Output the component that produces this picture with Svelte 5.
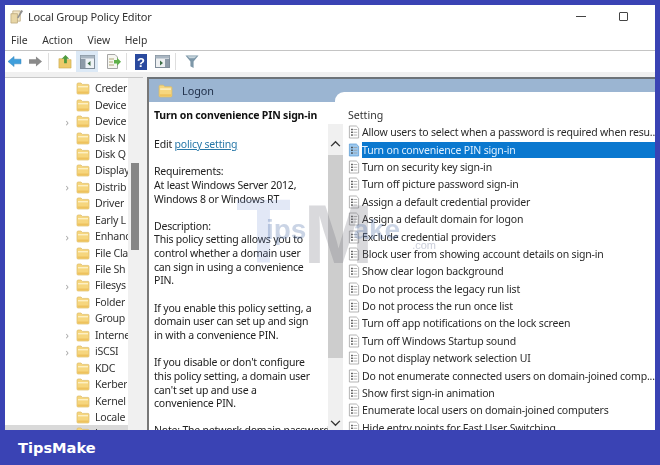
<script>
  const tree = [
    ['Creder', 0], ['Device', 0], ['Device', 1], ['Disk N', 0], ['Disk Q', 0],
    ['Display', 0], ['Distrib', 1], ['Driver', 0], ['Early L', 0], ['Enhanc', 1],
    ['File Cla', 0], ['File Sh', 0], ['Filesys', 1], ['Folder', 0], ['Group', 0],
    ['Interne', 1], ['iSCSI', 1], ['KDC', 0], ['Kerber', 0], ['Kernel', 0], ['Locale', 0], ['Logon', 0]
  ];
  const desc = [
    'Edit|', '', 'Requirements:', 'At least Windows Server 2012,', 'Windows 8 or Windows RT', '',
    'Description:', 'This policy setting allows you to', 'control whether a domain user', 'can sign in using a convenience', 'PIN.', '',
    'If you enable this policy setting, a', 'domain user can set up and sign', 'in with a convenience PIN.', '',
    "If you disable or don't configure", 'this policy setting, a domain user', "can't set up and use a", 'convenience PIN.', '',
    'Note: The network domain password'
  ];
  const settings = [
    'Allow users to select when a password is required when resu...',
    'Turn on convenience PIN sign-in',
    'Turn on security key sign-in',
    'Turn off picture password sign-in',
    'Assign a default credential provider',
    'Assign a default domain for logon',
    'Exclude credential providers',
    'Block user from showing account details on sign-in',
    'Show clear logon background',
    'Do not process the legacy run list',
    'Do not process the run once list',
    'Turn off app notifications on the lock screen',
    'Turn off Windows Startup sound',
    'Do not display network selection UI',
    'Do not enumerate connected users on domain-joined comp...',
    'Show first sign-in animation',
    'Enumerate local users on domain-joined computers',
    'Hide entry points for Fast User Switching'
  ];
</script>

{#snippet folder(w)}
  <svg class="folder" width={w} height={w} viewBox="0 0 14 14">
    <path d="M1 3.2 Q1 2 2.2 2 H5 L6.4 3.4 H12 Q13 3.4 13 4.4 V12 Q13 13 12 13 H2 Q1 13 1 12 Z" fill="#f6d67e" stroke="#dcbc68" stroke-width=".7"/>
    <path d="M2 5 H12 V6.4 H2 Z" fill="#fdf0c4"/>
    <path d="M1.5 10.5 H12.5 V12.4 H1.5 Z" fill="#eec25e"/>
  </svg>
{/snippet}

{#snippet policy(sel)}
  <svg class="policy" width="12" height="14" viewBox="0 0 13 14">
    <path d="M1.5 .5 H9 L11.5 3 V13.5 H1.5 Z" fill={sel ? '#9cc8ee' : '#fff'} stroke={sel ? '#5a9bd5' : '#9a9a9a'} stroke-width=".8"/>
    <g fill="#333"><rect x="3.5" y="3.5" width="1.6" height="1.6"/><rect x="3.5" y="6.5" width="1.6" height="1.6"/><rect x="3.5" y="9.5" width="1.6" height="1.6"/></g>
    <g stroke="#999" stroke-width=".8"><path d="M6 4.3 H10M6 7.3 H10M6 10.3 H10"/></g>
  </svg>
{/snippet}

<div class="page">
  <div class="window">
    <header class="title">
      <svg width="14" height="15" viewBox="0 0 15 16">
        <path d="M3 2 H11 V13 H3 Z" fill="#f2e6c8" stroke="#b9a67a" stroke-width=".8"/>
        <path d="M1 5 H8 V15 H1 Z" fill="#e8d6a6" stroke="#b9a67a" stroke-width=".8"/>
        <path d="M12 1 L14 2 L9 10 L7.6 9.4 Z" fill="#8f8f8f"/>
      </svg>
      <span>Local Group Policy Editor</span>
      <div class="win-btns">
        <i class="min"></i>
        <i class="max"></i>
      </div>
    </header>

    <nav class="menu">
      <span>File</span><span>Action</span><span>View</span><span>Help</span>
    </nav>

    <div class="toolbar">
      <svg width="15" height="13" viewBox="0 0 16 14"><path d="M1 7 L7.5 1.5 V4.5 H15 V9.5 H7.5 V12.5 Z" fill="#3f9fdc" stroke="#2d7fb8" stroke-width=".5"/></svg>
      <svg class="fwd" width="15" height="13" viewBox="0 0 16 14"><path d="M15 7 L8.5 1.5 V4.5 H1 V9.5 H8.5 V12.5 Z" fill="#8a8a8a"/></svg>
      <b class="sep"></b>
      <svg width="14" height="15" viewBox="0 0 15 16">
        <path d="M1 5 H6 L7 6 H14 V15 H1 Z" fill="#ecca6a" stroke="#c9a64a" stroke-width=".6"/>
        <path d="M8 1 L12 5 H9.5 V10 H6.5 V5 H4 Z" fill="#4e9a3e"/>
      </svg>
      <span class="active">
        <svg width="15" height="14" viewBox="0 0 15 14">
          <rect x=".5" y=".5" width="14" height="13" fill="#eef2f6" stroke="#7f8c99"/>
          <rect x=".5" y=".5" width="14" height="3" fill="#a9b6c2"/>
          <rect x="1" y="4" width="4.5" height="9" fill="#8d9aa7"/>
          <path d="M10.5 6 V11 L7.5 8.5 Z" fill="#3e6e46"/>
        </svg>
      </span>
      <svg class="ic2" width="15" height="15" viewBox="0 0 15 15">
        <path d="M1.5 .5 H9 L11.5 3 V14.5 H1.5 Z" fill="#f6f6f2" stroke="#a5a5a5"/>
        <path d="M3 5 H8M3 8 H7M3 11 H8" stroke="#b0a878"/>
        <path d="M8 6 H11 V3.8 L15 7.8 L11 11.8 V9.6 H8 Z" fill="#5fb04a"/>
      </svg>
      <b class="sep s1"></b>
      <svg width="12" height="16" viewBox="0 0 12 16">
        <rect width="12" height="16" fill="#2a4a9e"/>
        <text x="6" y="13" text-anchor="middle" font-family="Liberation Sans" font-weight="700" font-size="13" fill="#fff">?</text>
      </svg>
      <svg class="ic4" width="15" height="13" viewBox="0 0 15 13">
        <rect x=".5" y=".5" width="14" height="12" fill="#eef0f2" stroke="#7f8c99"/>
        <rect x=".5" y=".5" width="14" height="3" fill="#a9b6c2"/>
        <rect x="10" y="4" width="4" height="8" fill="#8d9aa7"/>
        <path d="M5 5.5 V10.5 L8 8 Z" fill="#3e6e46"/>
      </svg>
      <b class="sep"></b>
      <svg width="14" height="15" viewBox="0 0 15 15">
        <path d="M.5 1 H14.5 L9.2 7.5 V14.5 L5.8 12.5 V7.5 Z" fill="#7d97a8"/>
        <path d="M2.5 2 H12.5 L10 4 H5 Z" fill="#c6d4dc"/>
      </svg>
    </div>

    <div class="panes">
      <aside class="tree">
        <ul>
          {#each tree as [name, exp], i}
            <li class:current={i === tree.length - 1}>
              <em class:hidden={!exp}>›</em>
              {@render folder(14)}
              <span>{name}</span>
            </li>
          {/each}
        </ul>
        <div class="tree-scroll"><div class="tree-thumb"></div></div>
      </aside>

      <section class="right">
        <div class="head">
          {@render folder(15)}
          <span>Logon</span>
        </div>
        <div class="cut"></div>
        <div class="body">
          <div class="desc">
            <h2>Turn on convenience PIN sign-in</h2>
            {#each desc as line}
              {#if line === 'Edit|'}
                <p>Edit <a href="#top">policy setting </a></p>
              {:else}
                <p>{line}</p>
              {/if}
            {/each}
          </div>
          <div class="vscroll">
            <svg class="chev up" width="11" height="7" viewBox="0 0 12 8"><path d="M1 7 L6 2 L11 7" fill="none" stroke="#333" stroke-width="1.6"/></svg>
            <div class="vthumb"></div>
            <svg class="chev down" width="11" height="7" viewBox="0 0 12 8"><path d="M1 1 L6 6 L11 1" fill="none" stroke="#333" stroke-width="1.6"/></svg>
          </div>
          <div class="list">
            <div class="colhead">Setting</div>
            {#each settings as s, i}
              <div class="row" class:sel={i === 1}>
                {@render policy(i === 1)}
                <span>{s}</span>
              </div>
            {/each}
          </div>
        </div>
      </section>
    </div>

    <div class="mark"><span class="bigT">T</span><span class="sm ips">ips</span><span class="bigM">M</span><span class="sm ake">ake</span><small>.com</small></div>
  </div>
  <footer>TipsMake</footer>
</div>

<style>
  :global(body) { margin: 0; }
  .page {
    width: 660px; height: 465px; background: #3a43b4; overflow: hidden;
    display: flex; flex-direction: column;
    font-family: "Noto Sans", sans-serif; color: #222;
  }
  .window {
    position: relative; margin: 5px 5px 0; height: 425px; flex: none;
    background: #fff; overflow: hidden; display: flex; flex-direction: column;
    filter: blur(.3px);
  }
  .title {
    height: 23px; padding: 0 0 2px 5px; flex: none; display: flex; align-items: center; gap: 4px;
    font-size: 11px; letter-spacing: -.2px;
  }
  .title span { color: #333; }
  .win-btns { margin-left: auto; display: flex; align-items: center; gap: 33px; padding-right: 27px; }
  .min { width: 10px; height: 1px; background: #444; display: block; }
  .max { width: 7px; height: 7px; border: 1px solid #444; border-radius: 1px; display: block; }
  .menu {
    height: 20px; flex: none; display: flex; align-items: center; gap: 14.5px;
    padding-left: 6px; font-size: 10.4px; color: #333; border-bottom: 1px solid #c4c4c4;
  }
  .toolbar {
    height: 21px; flex: none; display: flex; align-items: center; padding-left: 2px;
  }
  .toolbar svg { display: block; flex: none; }
  .fwd { margin-left: 6px; }
  .sep { width: 1px; height: 17px; background: #dedede; margin: 0 9px 0 5px; display: block; }
  .active { background: #dce9f6; width: 22px; height: 21px; display: flex; align-items: center; justify-content: center; margin-left: 4px; }
  .ic2 { margin-left: 8px; }
  .s1 { margin-right: 8px; }
  .ic4 { margin-left: 8px; }
  .panes {
    flex: 1; min-height: 0; display: grid; grid-template-columns: 138px 1fr;
    column-gap: 4px; background: #f0f0f0; padding-top: 5px;
  }
  .tree {
    background: #fff; border-top: 1px solid #c8c8c8; position: relative; overflow: hidden;
    display: flex;
  }
  .tree ul { list-style: none; margin: 0; padding: 2px 0 0 0; flex: 1; min-width: 0; overflow: hidden; }
  .tree li {
    height: 16.45px; display: flex; align-items: center; font-size: 10.6px; letter-spacing: -.25px; color: #333;
    padding-left: 53px; white-space: nowrap; overflow: hidden;
  }
  .tree li.current { background: #d9d9d9; }
  .tree em { width: 18px; font-style: normal; color: #aaa; font-size: 11px; flex: none; text-align: center; }
  .tree em.hidden { visibility: hidden; }
  .tree li :global(.folder) { flex: none; margin-right: 5px; }
  .tree li span { overflow: hidden; }
  .tree-scroll { width: 15px; flex: none; background: #f0f0f0; padding: 85px 4px 0 3px; box-sizing: border-box; }
  .tree-thumb { height: 87px; background: #868686; }
  .right {
    position: relative; background: #fff; border-top: 2px solid #6d7378; border-left: 2px solid #777;
    display: flex; flex-direction: column; min-width: 0; overflow: hidden;
  }
  .head {
    height: 23px; flex: none; background: #9bb5d2; display: flex; align-items: center;
    gap: 9px; padding-left: 9px; font-size: 10.8px; color: #1d2c46;
  }
  .cut {
    position: absolute; left: 186px; right: 0; top: 13px; height: 20px; background: #fff;
    border-top-left-radius: 9px;
  }
  .body { flex: 1; min-height: 0; display: flex; position: relative; }
  .desc { width: 179px; flex: none; padding: 6px 0 0 5px; box-sizing: border-box; font-size: 10.5px; letter-spacing: -.2px; line-height: 13.65px; color: #222; }
  .desc h2 { font-size: 10.5px; letter-spacing: -.17px; line-height: 14px; font-weight: 700; margin: 0 0 16px; white-space: nowrap; color: #111; }
  .desc p { margin: 0; height: 13.65px; white-space: nowrap; overflow: hidden; }
  .desc a { color: #2878a8; text-decoration: underline; }
  .vscroll {
    width: 15px; flex: none; margin-top: 22px; background: #f0f0f0; display: flex; flex-direction: column; align-items: center;
  }
  .chev { flex: none; }
  .chev.up { margin: 16px 0 8px; }
  .chev.down { margin-top: auto; margin-bottom: 3px; }
  .vthumb { flex: none; height: 203px; align-self: stretch; background: #cdcdcd; }
  .list { flex: 1; min-width: 0; padding-left: 5px; }
  .colhead { font-size: 10.6px; height: 16.5px; padding-top: 5px; line-height: 16px; color: #333; }
  .row {
    height: 17.4px; display: flex; align-items: center; gap: 2px; font-size: 10.5px; letter-spacing: -.18px; color: #2a2a2a; white-space: nowrap;
  }
  .row :global(.policy) { flex: none; }
  .row span { flex: 1; line-height: 16px; }
  .row.sel span { background: #0a78cf; color: #dff0ff; }
  .mark {
    position: absolute; left: 231px; top: 182px; font: 700 28px/1 "Liberation Sans", sans-serif;
    white-space: nowrap; pointer-events: none;
  }
  .bigT { font-size: 90px; color: rgba(110, 140, 210, .2); }
  .bigM { font-size: 84px; color: rgba(110, 110, 120, .26); margin-left: -3px; margin-right: -20px; }
  .sm { color: rgba(90, 120, 175, .32); vertical-align: 24px; }
  .ips { margin-left: -25px; }
  .mark small { font-size: 11px; font-weight: 400; color: rgba(120, 130, 160, .4); margin-left: 12px; vertical-align: 14px; }
  footer {
    flex: 1; display: flex; align-items: center; padding-left: 18px;
    font: 700 14.6px "DejaVu Sans", sans-serif; color: #fff;
  }
</style>
